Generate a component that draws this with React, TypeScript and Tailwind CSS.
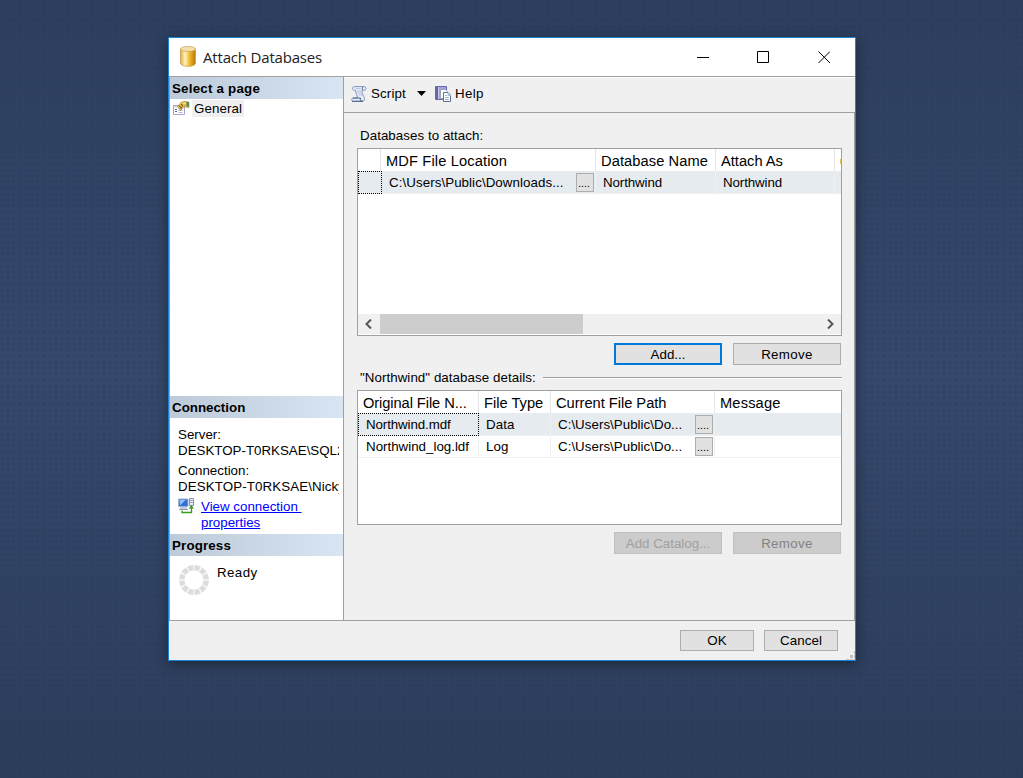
import type { ReactNode } from 'react';

type BoxProps = { className?: string; children?: ReactNode };

function PanelHeader({ children }: BoxProps) {
  return (
    <div className="h-[22px] shrink-0 bg-linear-to-r from-[#bccad9] to-[#d8e5f2] pl-[2px] text-[13.33px] leading-[23.5px] font-bold">
      {children}
    </div>
  );
}

function Button({ className = '', children }: BoxProps) {
  return (
    <button className={`flex items-center justify-center border text-[13.33px] leading-[16px] ${className}`}>
      {children}
    </button>
  );
}

function BrowseButton() {
  return (
    <button className="h-[19px] w-[18px] shrink-0 border border-[#adadad] bg-[#e1e1e1] pr-[2px] text-center text-[11px] leading-[18px] tracking-[-0.1px]">
      ....
    </button>
  );
}

function HeadCell({ className = '', children }: BoxProps) {
  return (
    <div className={`shrink-0 overflow-hidden border-r border-[#e6e6e6] whitespace-nowrap text-[14.67px] leading-[24.5px] ${className}`}>
      {children}
    </div>
  );
}

function Cell({ className = '', children }: BoxProps) {
  return (
    <div className={`flex h-[22px] shrink-0 overflow-hidden border-r border-[#f0f0f0] whitespace-nowrap text-[13.33px] ${className}`}>
      {children}
    </div>
  );
}

function DatabaseIcon() {
  return (
    <svg width="16" height="21" viewBox="0 0 16 21">
      <defs>
        <linearGradient id="gold">
          <stop offset="0" stopColor="#e0ab3c" />
          <stop offset=".3" stopColor="#fff4c0" />
          <stop offset=".6" stopColor="#f0bb2c" />
          <stop offset="1" stopColor="#b8770a" />
        </linearGradient>
      </defs>
      <path d="M.5 3v14c0 4.500 15 4.500 15 0V3z" fill="url(#gold)" stroke="#c7964a" strokeWidth=".7" />
      <ellipse cx="8" cy="3" rx="7.500" ry="2.500" fill="#f6e0a8" stroke="#c9a060" strokeWidth=".7" />
    </svg>
  );
}

function PageIcon() {
  return (
    <svg width="17" height="15" viewBox="0 0 17 15">
      <path d="M.5 4.500h11v9H.500z" fill="#fff" stroke="#a4a7cd" />
      <path d="M1 5h10v1.500H1z" fill="#d5d8ee" />
      <path d="M2 8.500h2M2 10.500h2" stroke="#5c60a4" />
      <path d="M5.500 9.500h4M5.500 11.500h4" stroke="#b3b6d1" />
      <path d="M4.500 5.500l3.500-4L10.500.5H14l2 1v5l-3.500-.5-1.500-.5-3.500 4z" fill="#e8bb3f" stroke="#a08a45" strokeWidth=".6" />
      <path d="M6 4.500l3 3M8 3l2 2M7 7.500l2-2" stroke="#4b4428" strokeWidth=".9" />
      <path d="M13.500 1H16v4.500h-2.500z" fill="#4d8c62" />
      <path d="M9 2.500l3.500-1V3z" fill="#fff0a2" />
    </svg>
  );
}

function ScriptIcon() {
  return (
    <svg width="16" height="16" viewBox="0 0 16 16">
      <path d="M3.500.6H13c2.600 0 2.600 3.700 0 3.700h-1.700c-.8 2 .2 4 1.400 6.200 1.500 2.700.5 4.800-1.200 4.800H2C.3 15.300.3 12 2 12h4.500C6.500 9 4.500 7.500 4.500 4.300h-1C.8 4.300.8.6 3.500.6z" fill="#e6edf9" stroke="#8294b8" />
      <path d="M12 1c-1 1-1 2.500-.2 3.200M2 12h7.500c-.8 1.400-.2 3 1.500 3M1 15.300h11" fill="none" stroke="#485e8c" />
      <path d="M4.500 2.500h5M6 5h4M6.500 7h4M8 9h3" stroke="#b4c3df" />
    </svg>
  );
}

function HelpIcon() {
  return (
    <svg width="17" height="16" viewBox="0 0 17 16">
      <path d="M.5.500h11v13H.500z" fill="#a3a4d8" stroke="#6668a9" />
      <path d="M1 1h2v12H1z" fill="#66679f" />
      <path d="M3.500 1v12" stroke="#c5c6e8" />
      <path d="M5.500 3.500h5l2 2v7h-7z" fill="#fff" stroke="#9ba3bd" />
      <path d="M8.500 6.500h4.500l2.500 2.500v6.500h-7z" fill="#fff" stroke="#60718e" />
      <path d="M13 6.500v3h3M10 9.500h2M10 11.500h4M10 13.500h4" fill="none" stroke="#a5b7cf" />
    </svg>
  );
}

function ConnectionIcon() {
  return (
    <svg className="-mt-px" width="16" height="16" viewBox="0 0 16 16">
      <path d="M.5 1h9.500v7.500H.500z" fill="#2f6fd6" stroke="#a3b2cf" />
      <path d="M1.500 2h6L2 7.500z" fill="#8fc1fa" />
      <path d="M2 10h7M1 11.500h9" stroke="#8c9cb8" />
      <path d="M11.500.500h4v7h-4z" fill="#e7eaf1" stroke="#8993a7" />
      <path d="M12.500 2.500h2M12.500 4.500h2" stroke="#8c96a8" />
      <path d="M4 12.500v2h9.500V10" fill="none" stroke="#34a116" strokeWidth="1.300" />
      <path d="M10.500 10.500l3-3.500 2.500 3.500z" fill="#34a116" />
    </svg>
  );
}

function Spinner() {
  return (
    <svg width="30" height="30" viewBox="0 0 30 30">
      <circle cx="15" cy="15" r="12.200" fill="none" stroke="#dcdcdc" strokeWidth="5.500" pathLength="120" strokeDasharray="8.300 1.700" strokeDashoffset="-.85" />
    </svg>
  );
}

function Sidebar() {
  return (
    <aside className="flex w-[175px] shrink-0 flex-col border-x border-[#a0a0a0] bg-white">
      <PanelHeader><span className="tracking-[0.22px]">Select a page</span></PanelHeader>
      <div className="flex h-[297px] shrink-0 items-start pt-[1px] pl-[3px]">
        <div className="mt-px"><PageIcon /></div>
        <div className="ml-[2px] h-[17px] bg-[#f0f0f0] px-[2px] text-[13.33px] leading-[17px] tracking-[0.08px]">General</div>
      </div>
      <PanelHeader>Connection</PanelHeader>
      <div className="h-[116px] shrink-0 overflow-hidden pt-[9px] pr-[4px] pl-[8px] text-[13.33px] leading-[16px] whitespace-nowrap">
        <div>Server:</div>
        <div className="overflow-hidden">DESKTOP-T0RKSAE\SQL2</div>
        <div className="mt-[4px]">Connection:</div>
        <div className="overflow-hidden tracking-[0.1px]">DESKTOP-T0RKSAE\Nicky</div>
        <div className="mt-[4px] flex items-start">
          <ConnectionIcon />
          <a className="ml-[7px] whitespace-pre text-[#0000ff] underline">{'View connection \nproperties'}</a>
        </div>
      </div>
      <PanelHeader><span className="tracking-[0.15px]">Progress</span></PanelHeader>
      <div className="flex grow items-start pt-[9px] pl-[9px]">
        <Spinner />
        <div className="ml-[8px] text-[13.33px] leading-[16px] tracking-[0.4px]">Ready</div>
      </div>
    </aside>
  );
}

function Toolbar() {
  return (
    <div className="flex h-[36px] shrink-0 items-center border-t border-b border-t-white border-b-[#a0a0a0] pb-[3px] pl-[7px] text-[13.33px]">
      <ScriptIcon />
      <span className="ml-[4px] w-[46px] tracking-[0.15px]">Script</span>
      <svg width="9" height="5" viewBox="0 0 9 5"><path d="M0 0h9L4.500 5z" /></svg>
      <span className="ml-[9px]"><HelpIcon /></span>
      <span className="ml-[3px] tracking-[0.3px]">Help</span>
    </div>
  );
}

function AttachGrid() {
  return (
    <div className="flex h-[188px] w-[485px] shrink-0 flex-col border border-[#a0a0a0] bg-white">
      <div className="flex h-[22px] overflow-hidden">
        <HeadCell className="w-[23px]" />
        <HeadCell className="w-[215px] pl-[5px] tracking-[0.13px]">MDF File Location</HeadCell>
        <HeadCell className="w-[120px] pl-[5px] tracking-[0.08px]">Database Name</HeadCell>
        <HeadCell className="w-[119px] pl-[5px]">Attach As</HeadCell>
        <div className="flex w-[6px] items-center overflow-hidden pt-[2px] pl-[5px]"><span className="h-[5px] w-px bg-[#f5bd58]" /></div>
      </div>
      <div className="flex h-[23px] shrink-0 border-b border-[#f0f0f0] bg-[#e6ebf0] leading-[23.5px]">
        <div className="-mb-px h-[23px] w-[24px] shrink-0 border border-dotted border-black" />
        <Cell className="w-[214px] pl-[7px]">
          <span className="w-[187px] tracking-[0.07px]">C:\Users\Public\Downloads...</span>
          <span className="mt-[2px] flex"><BrowseButton /></span>
        </Cell>
        <Cell className="w-[120px] pl-[7px] tracking-[-0.1px]">Northwind</Cell>
        <Cell className="w-[119px] pl-[7px] tracking-[-0.1px]">Northwind</Cell>
      </div>
      <div className="grow" />
      <div className="mb-px flex h-[20px] shrink-0 items-center bg-[#f0f0f0]">
        <svg className="ml-[6px]" width="9" height="10" viewBox="0 0 9 10"><path d="M7 .5L2.500 5 7 9.500" fill="none" stroke="#555" strokeWidth="2" /></svg>
        <div className="ml-[7px] h-[20px] w-[203px] bg-[#cdcdcd]" />
        <svg className="mr-[6px] ml-auto" width="9" height="10" viewBox="0 0 9 10"><path d="M2 .5L6.500 5 2 9.500" fill="none" stroke="#555" strokeWidth="2" /></svg>
      </div>
    </div>
  );
}

const files = [
  { name: 'Northwind.mdf', type: 'Data', selected: true },
  { name: 'Northwind_log.ldf', type: 'Log', selected: false },
];

function DetailsGrid() {
  return (
    <div className="flex h-[135px] w-[485px] shrink-0 flex-col border border-[#a0a0a0] bg-white">
      <div className="flex h-[22px]">
        <HeadCell className="w-[121px] pl-[5px] tracking-[-0.08px]">Original File N...</HeadCell>
        <HeadCell className="w-[72px] pl-[5px]">File Type</HeadCell>
        <HeadCell className="w-[164px] pl-[5px] tracking-[-0.02px]">Current File Path</HeadCell>
        <div className="pl-[5px] text-[14.67px] leading-[24.5px] tracking-[0.15px]">Message</div>
      </div>
      {files.map((file) => (
        <div key={file.name} className={`flex shrink-0 border-b border-[#f0f0f0] ${file.selected ? 'h-[23px] bg-[#e6ebf0] leading-[23.5px]' : 'h-[22px] bg-white leading-[21.5px]'}`}>
          {file.selected ? (
            <div className="z-10 h-[23px] w-[121px] shrink-0 border border-dotted border-black pl-[7px] text-[13.33px] leading-[21px] tracking-[-0.1px]">{file.name}</div>
          ) : (
            <Cell className="w-[121px] pl-[8px]">{file.name}</Cell>
          )}
          <Cell className="w-[72px] pl-[7px] tracking-[0.1px]">{file.type}</Cell>
          <Cell className="w-[164px] pl-[7px]">
            <span className="w-[137px] tracking-[0.03px]">C:\Users\Public\Do...</span>
            <span className={file.selected ? 'mt-[2px] flex' : 'mt-px flex'}><BrowseButton /></span>
          </Cell>
        </div>
      ))}
    </div>
  );
}

export default function App() {
  return (
    <div className="flex h-[778px] w-[1023px] items-start bg-[#2f4263] bg-[radial-gradient(circle_at_2px_2px,rgba(36,52,84,0.4)_0px,transparent_2px),linear-gradient(to_bottom,#2d3e5e_0%,#35496c_48%,#2c3c5b_100%)] bg-[size:6px_6px,100%_100%] pt-[37px] pl-[168px] font-['Liberation_Sans',Arial,sans-serif] text-black">
      <main className="flex h-[624px] w-[688px] flex-col border border-[#1883d7] bg-[#f0f0f0] shadow-[0_3px_12px_rgba(0,0,0,0.4)]">
        <header className="flex h-[39px] shrink-0 items-center border-b border-[#a0a0a0] bg-white pl-[11px]">
          <span className="-mt-[2px]"><DatabaseIcon /></span>
          <h1 className="ml-[7px] font-['Open_Sans','Noto_Sans',sans-serif] text-[15px] leading-[20px] tracking-[-0.18px] text-[#222]">Attach Databases</h1>
          <svg className="mr-[25px] ml-auto" width="134" height="13" viewBox="0 0 134 13" fill="none" stroke="#000">
            <path d="M1 6.500h12M61.500.500h11v11h-11zM122.500.500l11.500 11.500M134 .5l-11.500 11.500" />
          </svg>
        </header>
        <div className="flex h-[544px] shrink-0 border-b border-[#a0a0a0]">
          <Sidebar />
          <section className="flex grow flex-col">
            <Toolbar />
            <div className="flex grow flex-col border-r border-[#a0a0a0] pl-[13px]">
              <div className="mt-[15px] ml-[3px] h-[20px] text-[13.33px] leading-[16px] tracking-[0.05px]">Databases to attach:</div>
              <AttachGrid />
              <div className="mt-[7px] flex gap-[11px] pl-[257px]">
                <Button className="h-[22px] w-[108px] border-2 border-[#0078d7] bg-[#e1e1e1] pt-[2px]">Add...</Button>
                <Button className="h-[22px] w-[108px] border-[#adadad] bg-[#e1e1e1] pt-[2px] tracking-[0.35px]">Remove</Button>
              </div>
              <div className="mt-[5px] mb-[4px] flex h-[16px] w-[485px] items-center gap-[7px] pl-[3px] text-[13.33px] leading-[16px]">
                <span className="tracking-[0.06px] whitespace-nowrap">"Northwind" database details:</span>
                <span className="h-[2px] grow border-t border-b border-t-[#a0a0a0] border-b-white" />
              </div>
              <DetailsGrid />
              <div className="mt-[7px] flex gap-[11px] pl-[257px]">
                <Button className="h-[22px] w-[108px] border-[#bfbfbf] bg-[#cccccc] pt-[2px] text-[#a0a0a0]">Add Catalog...</Button>
                <Button className="h-[22px] w-[108px] border-[#bfbfbf] bg-[#cccccc] pt-[2px] tracking-[0.35px] text-[#838383]">Remove</Button>
              </div>
            </div>
          </section>
        </div>
        <footer className="flex grow items-start justify-end pt-[9px]">
          <Button className="h-[21px] w-[74px] border-[#adadad] bg-[#e1e1e1]">OK</Button>
          <Button className="ml-[10px] h-[21px] w-[74px] border-[#adadad] bg-[#e1e1e1] tracking-[0.1px]">Cancel</Button>
          <svg className="ml-[8px] self-end" width="9" height="10" viewBox="0 0 9 10" fill="#bfbfbf">
            <path d="M8 1h1v3H8zM4 5h3v3H4zM8 5h1v3H8zM0 9h3v1H0zM4 9h3v1H4zM8 9h1v1H8z" />
          </svg>
        </footer>
      </main>
    </div>
  );
}
